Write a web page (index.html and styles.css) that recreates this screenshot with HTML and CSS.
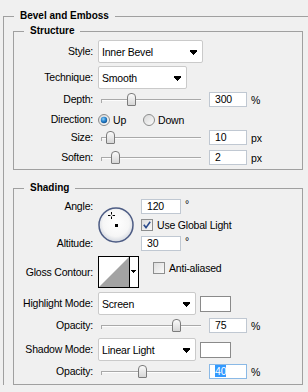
FILE: index.html
```html
<!DOCTYPE html>
<html lang="en">
<head>
    <meta charset="UTF-8">
    <meta name="viewport" content="width=device-width, initial-scale=1.0">
    <title>Bevel and Emboss</title>
    <link rel="stylesheet" href="styles.css">
</head>
<body>

    <!-- Bevel and Emboss panel -->
    <fieldset class="group outer">
        <legend>Bevel and Emboss</legend>

        <!-- Structure -->
        <fieldset class="group inner structure">
            <legend>Structure</legend>

            <div class="row row-tall">
                <span class="label">Style:</span>
                <div class="select select-style">
                    <span>Inner Bevel</span>
                    <svg class="arrow" width="7" height="5" viewBox="0 0 7 5"><rect x="0" y="0" width="7" height="2"/><rect x="1" y="2" width="5" height="1"/><rect x="2" y="3" width="3" height="1"/><rect x="3" y="4" width="1" height="1"/></svg>
                </div>
            </div>

            <div class="row row-tall mt-3">
                <span class="label">Technique:</span>
                <div class="select select-technique">
                    <span>Smooth</span>
                    <svg class="arrow" width="7" height="5" viewBox="0 0 7 5"><rect x="0" y="0" width="7" height="2"/><rect x="1" y="2" width="5" height="1"/><rect x="2" y="3" width="3" height="1"/><rect x="3" y="4" width="1" height="1"/></svg>
                </div>
            </div>

            <div class="row mt-3">
                <span class="label">Depth:</span>
                <div class="slider"><span class="thumb" style="left: 29px"></span></div>
                <div class="field">300</div>
                <span class="unit">%</span>
            </div>

            <div class="row mt-5">
                <span class="label">Direction:</span>
                <svg class="radio" width="12" height="12" viewBox="0 0 12 12">
                    <circle cx="6" cy="6" r="5.5" fill="url(#radioBg)" stroke="#8b8c8c"/>
                    <circle cx="6" cy="6" r="3.2" fill="url(#radioDot)"/>
                </svg>
                <span class="radio-text radio-up">Up</span>
                <svg class="radio" width="12" height="12" viewBox="0 0 12 12">
                    <circle cx="6" cy="6" r="5.5" fill="url(#radioBg)" stroke="#8b8c8c"/>
                </svg>
                <span class="radio-text">Down</span>
            </div>

            <div class="row mt-3">
                <span class="label">Size:</span>
                <div class="slider"><span class="thumb" style="left: 8px"></span></div>
                <div class="field">10</div>
                <span class="unit">px</span>
            </div>

            <div class="row mt-5">
                <span class="label">Soften:</span>
                <div class="slider"><span class="thumb" style="left: 13px"></span></div>
                <div class="field">2</div>
                <span class="unit">px</span>
            </div>
        </fieldset>

        <!-- Shading -->
        <fieldset class="group inner shading">
            <legend>Shading</legend>

            <div class="angle-block">
                <div class="angle-labels">
                    <span class="label">Angle:</span>
                    <span class="label">Altitude:</span>
                </div>
                <svg class="dial" width="36" height="36" viewBox="0 0 36 36">
                    <circle cx="18" cy="18" r="17" fill="url(#dialBg)" stroke="#4d5c84" stroke-width="1.5"/>
                    <rect x="17" y="17" width="3" height="3" fill="#000"/>
                    <path d="M10 8.5h2.5M14.5 8.5h2.5M13.5 5v2.5M13.5 9.5v2.5" stroke="#000" stroke-width="1"/>
                </svg>
                <div class="angle-fields">
                    <div class="row">
                        <div class="field field-angle">120</div>
                        <span class="deg">°</span>
                    </div>
                    <div class="row mt-3">
                        <svg class="checkbox" width="12" height="12" viewBox="0 0 12 12">
                            <rect x="0.5" y="0.5" width="11" height="11" fill="url(#checkBg)" stroke="#8e8f8f"/>
                            <path d="M2.8 5.8l2.2 2.8l4.2-5.8" fill="none" stroke="#2b4b8c" stroke-width="1.6"/>
                        </svg>
                        <span class="check-text">Use Global Light</span>
                    </div>
                    <div class="row mt-4">
                        <div class="field field-angle">30</div>
                        <span class="deg">°</span>
                    </div>
                </div>
            </div>

            <div class="row row-gloss mt-5">
                <span class="label">Gloss Contour:</span>
                <svg class="contour" width="41" height="32" viewBox="0 0 41 32">
                    <rect x="0.5" y="0.5" width="40" height="31" fill="#fff" stroke="#000"/>
                    <polygon points="1,31 31,1 31,31" fill="#a3a3a3"/>
                    <rect x="31" y="0" width="1" height="32" fill="#000"/>
                    <rect x="33" y="14" width="5" height="1"/>
                    <rect x="34" y="15" width="3" height="1"/>
                    <rect x="35" y="16" width="1" height="1"/>
                </svg>
                <div class="anti-alias">
                    <svg class="checkbox" width="12" height="12" viewBox="0 0 12 12">
                        <rect x="0.5" y="0.5" width="11" height="11" fill="url(#checkBg)" stroke="#8e8f8f"/>
                    </svg>
                    <span class="check-text">Anti-aliased</span>
                </div>
            </div>

            <div class="row row-tall mt-4">
                <span class="label">Highlight Mode:</span>
                <div class="select select-mode">
                    <span>Screen</span>
                    <svg class="arrow" width="7" height="5" viewBox="0 0 7 5"><rect x="0" y="0" width="7" height="2"/><rect x="1" y="2" width="5" height="1"/><rect x="2" y="3" width="3" height="1"/><rect x="3" y="4" width="1" height="1"/></svg>
                </div>
                <div class="swatch"></div>
            </div>

            <div class="row mt-3">
                <span class="label">Opacity:</span>
                <div class="slider"><span class="thumb" style="left: 74px"></span></div>
                <div class="field">75</div>
                <span class="unit">%</span>
            </div>

            <div class="row row-tall mt-5">
                <span class="label">Shadow Mode:</span>
                <div class="select select-mode">
                    <span>Linear Light</span>
                    <svg class="arrow" width="7" height="5" viewBox="0 0 7 5"><rect x="0" y="0" width="7" height="2"/><rect x="1" y="2" width="5" height="1"/><rect x="2" y="3" width="3" height="1"/><rect x="3" y="4" width="1" height="1"/></svg>
                </div>
                <div class="swatch"></div>
            </div>

            <div class="row mt-3">
                <span class="label">Opacity:</span>
                <div class="slider"><span class="thumb" style="left: 40px"></span></div>
                <div class="field field-focus"><span class="selected">40</span></div>
                <span class="unit">%</span>
            </div>
        </fieldset>
    </fieldset>

    <!-- Shared gradients -->
    <svg class="defs" width="0" height="0">
        <defs>
            <linearGradient id="radioBg" x1="0" y1="0" x2="1" y2="1">
                <stop offset="0" stop-color="#d6d6d6"/>
                <stop offset="1" stop-color="#fdfdfd"/>
            </linearGradient>
            <radialGradient id="radioDot" cx="40%" cy="35%" r="70%">
                <stop offset="0" stop-color="#8fd1f8"/>
                <stop offset="0.5" stop-color="#2b86cf"/>
                <stop offset="1" stop-color="#0d4f8f"/>
            </radialGradient>
            <linearGradient id="checkBg" x1="0" y1="0" x2="1" y2="1">
                <stop offset="0" stop-color="#dcdcdc"/>
                <stop offset="1" stop-color="#fbfbfb"/>
            </linearGradient>
            <radialGradient id="dialBg" cx="50%" cy="45%" r="55%">
                <stop offset="0" stop-color="#ffffff"/>
                <stop offset="0.7" stop-color="#f6f6f6"/>
                <stop offset="1" stop-color="#d3d7df"/>
            </radialGradient>
        </defs>
    </svg>
</body>
</html>
```

FILE: styles.css
```css
body {
    margin: 0;
    width: 308px;
    height: 392px;
    overflow: hidden;
    background-color: #f0f0f0;
    font-family: "Liberation Sans", Arial, sans-serif;
    font-size: 10.5px;
    letter-spacing: -0.2px;
    color: #000;
}
.defs {
    position: absolute;
    top: 0;
    left: 0;
}
.group {
    border: 1px solid #a0a0a0;
    margin: 0;
    padding: 0;
    min-width: 0;
    box-sizing: border-box;
}
.group > legend {
    font-size: 10px;
    font-weight: bold;
    letter-spacing: 0;
    line-height: 12px;
    padding: 0 6px;
    margin-left: 10px;
}
.outer {
    margin: 10px 0 0 3px;
    width: 305px;
    border-right: none;
    border-bottom: none;
}
.inner {
    margin-left: 9px;
    width: 290px;
}
.structure {
    margin-top: 3px;
    padding: 3px 0 4px 0;
}
.shading {
    margin-top: 12px;
    padding: 5px 0 5px 0;
}
.row {
    display: flex;
    align-items: center;
    height: 15px;
}
.row-tall {
    height: 23px;
}
.mt-3 { margin-top: 3px; }
.mt-4 { margin-top: 4px; }
.mt-5 { margin-top: 5px; }
.label {
    flex: none;
    width: 79px;
    margin-right: 5px;
    text-align: right;
    line-height: 15px;
    white-space: nowrap;
}
.select {
    position: relative;
    display: flex;
    align-items: center;
    height: 23px;
    box-sizing: border-box;
    padding-left: 3px;
    background-color: #fff;
    border: 1px solid #cacaca;
    border-radius: 2px;
}
.select .arrow {
    position: absolute;
    right: 5px;
    top: 9px;
}
.select-style { width: 105px; }
.select-technique { width: 89px; }
.select-mode { width: 98px; }
.slider {
    position: relative;
    flex: none;
    width: 103px;
    height: 15px;
}
.slider::before {
    content: '';
    position: absolute;
    left: 3px;
    right: 0;
    top: 7px;
    height: 1px;
    background-color: #a9a9a9;
    border-bottom: 1px solid #fdfdfd;
}
.slider::after {
    content: '';
    position: absolute;
    left: 3px;
    top: 7px;
    width: 1px;
    height: 4px;
    background-color: #a9a9a9;
}
.thumb {
    position: absolute;
    top: 1px;
    width: 9px;
    height: 13px;
    box-sizing: border-box;
    border: 1px solid #7c7c7c;
    border-radius: 4px 4px 1px 1px;
    background: linear-gradient(#fbfbfb, #d6d6d6);
    z-index: 1;
}
.field {
    flex: none;
    width: 38px;
    height: 15px;
    box-sizing: border-box;
    margin-left: 8px;
    padding-left: 5px;
    line-height: 13px;
    background-color: #fff;
    border: 1px solid #c0c8d2;
}
.field-focus {
    border-color: #8ab9e6;
}
.selected {
    background-color: #3399ff;
    color: #fff;
}
.unit {
    margin-left: 4px;
}
.radio {
    flex: none;
}
.radio-text {
    margin-left: 3px;
}
.radio-up {
    width: 30px;
}
.angle-block {
    display: flex;
    height: 52px;
}
.angle-labels {
    display: flex;
    flex-direction: column;
    justify-content: space-between;
}
.dial {
    flex: none;
    margin-top: 8px;
    margin-right: 7px;
}
.field-angle {
    width: 40px;
    margin-left: 0;
}
.deg {
    align-self: flex-start;
    margin-left: 4px;
    line-height: 11px;
}
.checkbox {
    flex: none;
}
.check-text {
    margin-left: 4px;
}
.row-gloss {
    height: 32px;
}
.contour {
    flex: none;
}
.anti-alias {
    display: flex;
    align-items: center;
    align-self: flex-start;
    margin-top: 6px;
    margin-left: 14px;
}
.swatch {
    width: 31px;
    height: 16px;
    box-sizing: border-box;
    margin-left: 4px;
    background-color: #fff;
    border: 1px solid #8a8a8a;
}
```
